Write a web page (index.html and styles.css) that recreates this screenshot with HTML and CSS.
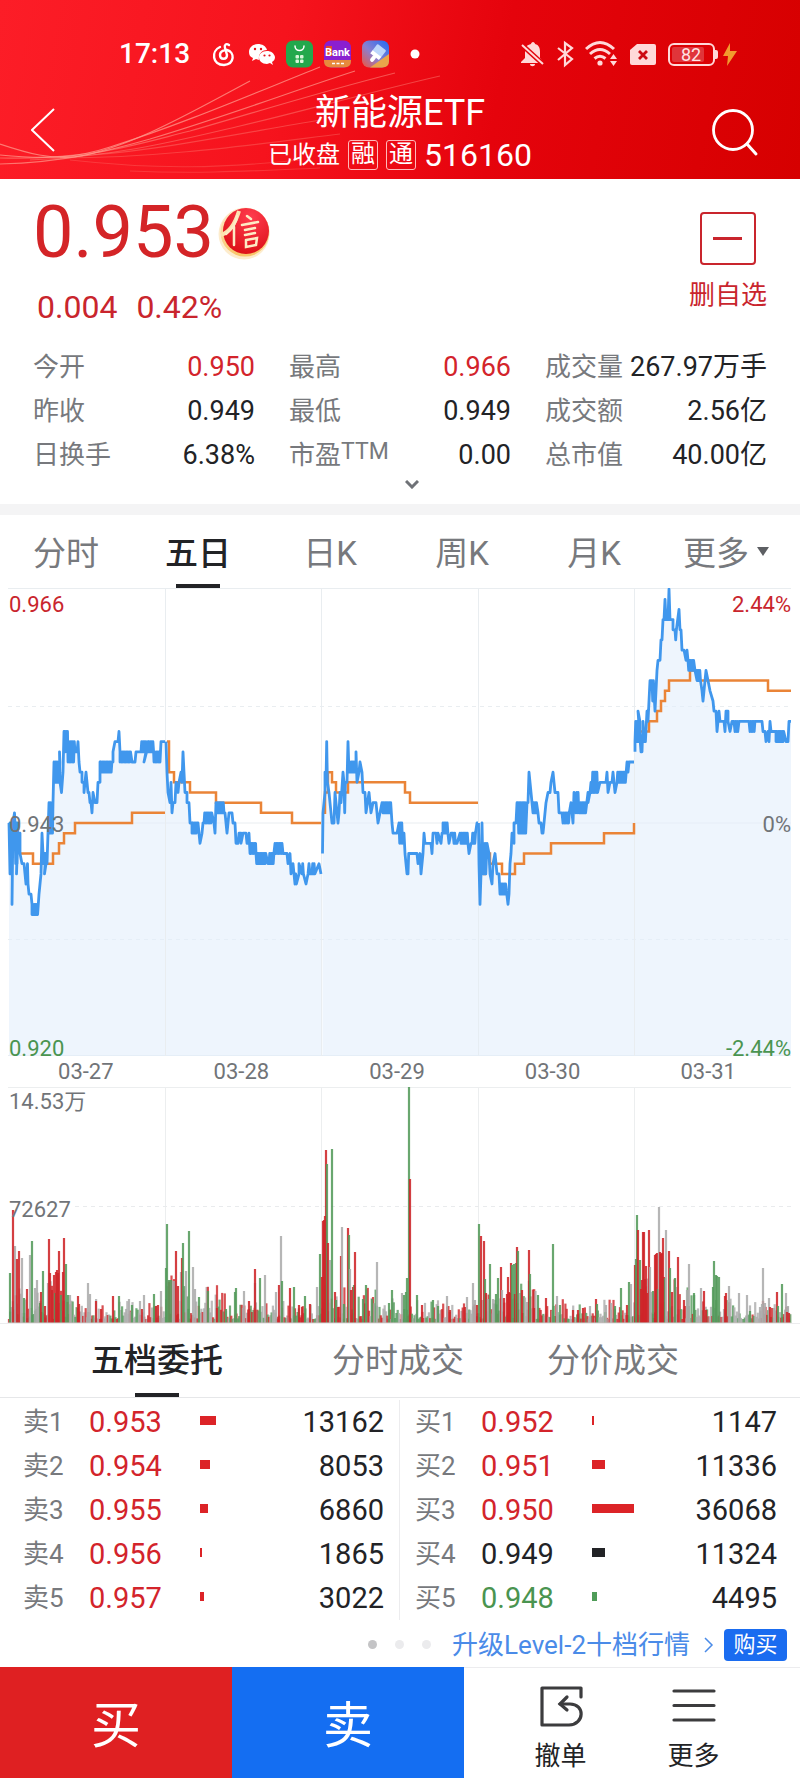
FILE: index.html
```html
<!DOCTYPE html>
<html lang="zh-CN">
<head>
<meta charset="utf-8">
<meta name="viewport" content="width=device-width, initial-scale=1">
<title>新能源ETF 516160</title>
<link rel="stylesheet" href="styles.css">
</head>
<body>
<header class="header">
  <svg class="header-waves" viewBox="0 0 800 179" preserveAspectRatio="none" aria-hidden="true">
    <g fill="none" stroke="#ff9a8c" stroke-width="1.200">
      <path opacity=".75" d="M0 144C30 154 50 159 75 157C130 148 190 113 250 81"/>
      <path opacity=".75" d="M0 155C50 160 80 157 110 147C180 125 250 95 320 67"/>
      <path opacity=".7" d="M0 164C70 162 110 150 150 139C230 115 290 92 355 71"/>
      <path opacity=".5" d="M0 158C90 160 130 146 190 131C260 111 320 92 395 73"/>
      <path opacity=".4" d="M30 160C120 156 180 140 240 126S370 92 440 76"/>
      <path opacity=".35" d="M60 157C140 154 220 137 320 120"/>
      <path opacity=".3" d="M60 158C160 158 250 145 340 134"/>
      <path opacity=".25" d="M70 160C160 170 220 168 300 160"/>
      <path opacity=".25" d="M130 171C200 174 250 171 320 168"/>
    </g>
  </svg>
  <div class="status">
    <span class="clock">17:13</span>
    <div class="status-left">
      <svg width="27" height="28" viewBox="0 0 27 28"><path fill="none" stroke="#fff" stroke-width="2.400" stroke-linecap="round" d="M19 5C16 3 14 5 15 8L17 15C17 20 10 20 10 15C10 11 14 10 17 10C25 12 25 24 14 25C2 25 1 11 10 7"/></svg>
      <svg width="27" height="28" viewBox="0 0 27 28"><path fill="#fff" d="M10 4C4 4 1 8 1 12C1 15 2 17 5 18L4 21L8 19L11 20C10 14 14 10 19 10C18 6 14 4 10 4Z"/><path fill="#fff" d="M19 11C14 11 11 14 11 17.500C11 21 14 24 19 24L22 23L25 25L24 22C26 21 27 19 27 17C26 13 23 11 19 11Z"/><g fill="#e8101a"><circle cx="7" cy="9" r="1.200"/><circle cx="13" cy="9" r="1.200"/><circle cx="16.500" cy="15.500" r="1.100"/><circle cx="21.500" cy="15.500" r="1.100"/></g></svg>
      <svg width="27" height="28" viewBox="0 0 27 28"><rect y=".5" width="27" height="27" rx="7" fill="#22a84c"/><path fill="none" stroke="#fff" stroke-width="1.500" stroke-linecap="round" d="M9 6C9 12 18 12 18 6"/><g fill="#d9f4d8"><rect x="9.500" y="15" width="3.500" height="3.500" rx="1"/><rect x="14" y="15" width="3.500" height="3.500" rx="1"/><rect x="9.500" y="19.500" width="3.500" height="3.500" rx="1"/><rect x="14" y="19.500" width="3.500" height="3.500" rx="1"/></g></svg>
      <svg width="27" height="28" viewBox="0 0 27 28"><rect y=".5" width="27" height="27" rx="7" fill="#8a1fd0"/><path fill="#e78a3c" d="M0 20H27V21Q27 27.500 20 27.500H7Q0 27.500 0 21Z"/><rect x="2" y="6" width="6" height="10" fill="#e5482c"/><text x="1" y="16" class="bank-text">Bank</text><path stroke="#fff" stroke-width="1.500" stroke-dasharray="3 1.500" d="M8 23.500H20"/></svg>
      <svg width="27" height="28" viewBox="0 0 27 28"><defs><linearGradient id="brush" x1="0" y1="1" x2="1" y2="0"><stop offset="0" stop-color="#f0563c"/><stop offset=".45" stop-color="#8a7fd0"/><stop offset="1" stop-color="#1f6cf5"/></linearGradient></defs><rect y=".5" width="27" height="27" rx="7" fill="url(#brush)"/><path fill="#e9a54b" d="M8 27.500L27 14V21Q27 27.500 20 27.500Z"/><g transform="rotate(38 14 14)"><rect x="9" y="5" width="11" height="9" rx="1" fill="#bcd6fb"/><rect x="9" y="13" width="11" height="4" fill="#fff"/><rect x="12.500" y="16" width="4" height="7" rx="2" fill="#fff"/></g></svg>
      <svg width="27" height="28" viewBox="0 0 27 28"><circle cx="15" cy="14" r="4.500" fill="#fff"/></svg>
    </div>
    <div class="status-right">
      <svg width="25" height="28" viewBox="0 0 25 28"><path fill="#ffd9d9" d="M12 2C13 2 14 3 14 4C18 5 19 8 19 12V18L22 22V23H0V22L4 18V11C4 7 6 5 10 4C10 3 11 2 12 2Z"/><path fill="#ffd9d9" d="M9 24H14C14 27 9 27 9 24Z"/><path stroke="#e3040c" stroke-width="5" d="M0 4L23 25"/><path stroke="#ffd9d9" stroke-width="2" d="M1 5L22 24"/></svg>
      <svg width="17" height="28" viewBox="0 0 17 28"><path fill="none" stroke="#ffd9d9" stroke-width="2.200" d="M1 8L15 19L8 25V3L15 8L1 20"/></svg>
      <svg width="33" height="28" viewBox="0 0 33 28"><g fill="none" stroke="#ffd9d9" stroke-width="3"><path d="M1 9Q15-4 29 9"/><path d="M5 14Q15 5 25 14"/><path d="M9.500 18.500Q15 14 20.500 18.500"/></g><circle cx="15" cy="23" r="2.600" fill="#ffd9d9"/><path fill="#ffd9d9" d="M25 19L28.500 14L32 19ZM25 21H32L28.500 26Z"/></svg>
      <svg width="28" height="28" viewBox="0 0 28 28"><path fill="#ffd9d9" d="M8 4H25Q27 4 27 6V23Q27 25 25 25H3Q1 25 1 23V10Z"/><path stroke="#cc0a12" stroke-width="2.800" d="M10 11L18 19M18 11L10 19"/></svg>
      <svg width="70" height="28" viewBox="0 0 70 28"><rect x="1" y="4" width="45" height="21" rx="5" fill="none" stroke="#ffd9d9" stroke-width="2"/><rect x="4" y="7" width="32" height="15" rx="2" fill="#e0353a"/><path fill="#ffd9d9" d="M47 10H48Q50 10 50 12V17Q50 19 48 19H47Z"/><text x="23" y="21" text-anchor="middle" class="battery-text">82</text><path fill="#f29a2e" d="M62 3L55 16H60L59 26L69 11H62Z"/></svg>
    </div>
  </div>
  <div class="navbar">
    <button class="icon-button back" type="button" aria-label="返回"><svg width="24" height="44" viewBox="0 0 24 44"><path fill="none" stroke="#fff" stroke-width="2" d="M23 1L1 22L23 43"/></svg></button>
    <div class="heading">
      <h1 class="title">新能源ETF</h1>
      <p class="subtitle"><span class="state">已收盘</span><span class="tag">融</span><span class="tag">通</span><span class="code">516160</span></p>
    </div>
    <button class="icon-button search" type="button" aria-label="搜索"><svg width="48" height="50" viewBox="0 0 48 50"><circle cx="22" cy="22" r="19.500" fill="none" stroke="#fff" stroke-width="2.800"/><path stroke="#fff" stroke-width="3" stroke-linecap="round" d="M36 36L45 46"/></svg></button>
  </div>
</header>

<main>
  <section class="quote">
    <div class="quote-top">
      <div>
        <div class="price-row">
          <span class="price">0.953</span>
          <svg width="52" height="54" viewBox="0 0 52 54" role="img" aria-label="信">
            <defs><radialGradient id="seal" cx=".6" cy=".2" r=".9"><stop offset="0" stop-color="#ff3c4e"/><stop offset="1" stop-color="#d90c12"/></radialGradient><linearGradient id="gold" x1="0" y1="0" x2="0" y2="1"><stop offset="0" stop-color="#ffeed0"/><stop offset="1" stop-color="#f8c466"/></linearGradient></defs>
            <circle cx="26" cy="28" r="25.500" fill="#fdeccd"/><circle cx="27" cy="26" r="24.500" fill="url(#gold)"/><circle cx="28" cy="25" r="23" fill="url(#seal)"/>
            <path fill="none" stroke="#fde3b0" stroke-width="4" d="M3 29Q15 25 21 5"/>
            <path fill="none" stroke="#fdebc4" stroke-width="2.500" stroke-linecap="round" d="M19 10Q18 20 8 28M16 21V39M29 10L33 13M24 19L40 16M27 24L37 22M27 29L37 27M28 34V41L38 39L39 32L28 34"/>
          </svg>
        </div>
        <div class="change"><span>0.004</span><span>0.42%</span></div>
      </div>
      <button class="favorite" type="button"><span class="minus"></span>删自选</button>
    </div>
    <dl class="stats">
      <div><dt>今开</dt><dd class="up">0.950</dd></div>
      <div><dt>最高</dt><dd class="up">0.966</dd></div>
      <div><dt>成交量</dt><dd>267.97万手</dd></div>
      <div><dt>昨收</dt><dd>0.949</dd></div>
      <div><dt>最低</dt><dd>0.949</dd></div>
      <div><dt>成交额</dt><dd>2.56亿</dd></div>
      <div><dt>日换手</dt><dd>6.38%</dd></div>
      <div><dt>市盈<span class="ttm">TTM</span></dt><dd>0.00</dd></div>
      <div><dt>总市值</dt><dd>40.00亿</dd></div>
    </dl>
    <button class="expand" type="button" aria-label="展开"><svg width="14" height="9" viewBox="0 0 14 9"><path fill="none" stroke="#6f7277" stroke-width="3" d="M1 1L7 7L13 1"/></svg></button>
  </section>

  <nav class="period-tabs">
    <button type="button">分时</button>
    <button type="button" class="active">五日</button>
    <button type="button">日K</button>
    <button type="button">周K</button>
    <button type="button">月K</button>
    <button type="button">更多<span class="caret"></span></button>
  </nav>

  <section class="chart">
    <svg id="price-chart" viewBox="0 0 800 468" aria-label="五日走势">
      <g fill="none" stroke="#e9edf0">
        <path d="M8 .5H791M8 235H791M8 467.500H791M165.500 0V468M321.500 0V468M478.500 0V468M634.500 0V468"/>
        <path stroke-dasharray="4 4" d="M8 118.500H791M8 351.500H791"/>
      </g>
    </svg>
    <span class="axis top-left up">0.966</span>
    <span class="axis top-right up">2.44%</span>
    <span class="axis mid-left">0.943</span>
    <span class="axis mid-right">0%</span>
    <span class="axis bottom-left down">0.920</span>
    <span class="axis bottom-right down">-2.44%</span>
  </section>
  <div class="dates"><span>03-27</span><span>03-28</span><span>03-29</span><span>03-30</span><span>03-31</span></div>
  <section class="chart">
    <svg id="volume-chart" viewBox="0 0 800 236" aria-label="成交量">
      <path fill="none" stroke="#eceeef" d="M8 .5H791M165.500 0V236M321.500 0V236M478.500 0V236M634.500 0V236"/>
      <path fill="none" stroke="#e9ebed" stroke-dasharray="4 4" d="M75 119.500H791"/>
    </svg>
    <span class="axis volume-top">14.53万</span>
    <span class="axis volume-mid">72627</span>
  </section>

  <nav class="book-tabs">
    <button type="button" class="active">五档委托</button>
    <button type="button">分时成交</button>
    <button type="button">分价成交</button>
  </nav>
  <section class="book">
    <table class="side">
      <colgroup><col class="c-level"><col class="c-price"><col class="c-bar"><col></colgroup>
      <tbody>
      <tr><th scope="row">卖1</th><td class="up">0.953</td><td><span class="bar up" style="width:16px"></span></td><td class="qty">13162</td></tr>
      <tr><th scope="row">卖2</th><td class="up">0.954</td><td><span class="bar up" style="width:10px"></span></td><td class="qty">8053</td></tr>
      <tr><th scope="row">卖3</th><td class="up">0.955</td><td><span class="bar up" style="width:8px"></span></td><td class="qty">6860</td></tr>
      <tr><th scope="row">卖4</th><td class="up">0.956</td><td><span class="bar up" style="width:2px"></span></td><td class="qty">1865</td></tr>
      <tr><th scope="row">卖5</th><td class="up">0.957</td><td><span class="bar up" style="width:4px"></span></td><td class="qty">3022</td></tr>
      </tbody>
    </table>
    <table class="side">
      <colgroup><col class="c-level"><col class="c-price"><col class="c-bar"><col></colgroup>
      <tbody>
      <tr><th scope="row">买1</th><td class="up">0.952</td><td><span class="bar up" style="width:2px"></span></td><td class="qty">1147</td></tr>
      <tr><th scope="row">买2</th><td class="up">0.951</td><td><span class="bar up" style="width:13px"></span></td><td class="qty">11336</td></tr>
      <tr><th scope="row">买3</th><td class="up">0.950</td><td><span class="bar up" style="width:42px"></span></td><td class="qty">36068</td></tr>
      <tr><th scope="row">买4</th><td>0.949</td><td><span class="bar" style="width:13px"></span></td><td class="qty">11324</td></tr>
      <tr><th scope="row">买5</th><td class="down">0.948</td><td><span class="bar down" style="width:5px"></span></td><td class="qty">4495</td></tr>
      </tbody>
    </table>
  </section>
  <div class="promo">
    <div class="dots"><i class="on"></i><i></i><i></i></div>
    <a class="upgrade" href="#level2">升级Level-2十档行情<svg width="10" height="16" viewBox="0 0 10 16"><path fill="none" stroke="#4a8be8" stroke-width="1.500" d="M1 1L8 8L1 15"/></svg></a>
    <button class="buy-level" type="button">购买</button>
  </div>
</main>

<footer class="actions">
  <button class="trade buy" type="button">买</button>
  <button class="trade sell" type="button">卖</button>
  <div class="tools">
    <button type="button"><svg width="44" height="42" viewBox="0 0 44 42"><g fill="none" stroke="#3c3c3e" stroke-width="3.200" stroke-linecap="round"><path stroke-linejoin="round" d="M42 11V2H3V39H30C46 38 46 18 31 18H21"/><path d="M28 11L21 18L28 24"/></g></svg>撤单</button>
    <button type="button"><svg width="44" height="42" viewBox="0 0 44 42"><path stroke="#3c3c3e" stroke-width="3.200" stroke-linecap="round" d="M2 5H42M2 19.500H42M2 34H42"/></svg>更多</button>
  </div>
</footer>
<script src="chart.js"></script>
</body>
</html>
```

FILE: styles.css
```css
* { box-sizing: border-box; }

body {
  margin: 0;
  background: #fff;
  color: #222326;
  font-family: Roboto, "Noto Sans CJK SC", sans-serif;
  font-size: 26px;
  line-height: 1;
}

h1, p, dl, dd { margin: 0; }

button {
  margin: 0;
  padding: 0;
  border: 0;
  background: none;
  color: inherit;
  font: inherit;
  cursor: pointer;
}

svg { display: block; }

.up { color: #d3242b; }
.down { color: #4a9450; }

/* Header */
.header {
  position: relative;
  height: 179px;
  padding-top: 37px;
  color: #fff;
  background: linear-gradient(100deg, #fc1d27 0%, #f6131d 35%, #e5030c 62%, #d60000 100%);
}
.header-waves {
  position: absolute;
  inset: 0;
  width: 100%;
  height: 100%;
}
.status {
  position: relative;
  display: flex;
  align-items: center;
  height: 34px;
  padding: 0 62px 0 119px;
}
.clock {
  flex: 0 0 91px;
  font-size: 28px;
  font-weight: 500;
}
.status-left { display: flex; gap: 11px; }
.status-right { display: flex; gap: 11px; margin-left: auto; }
.bank-text { font-size: 11px; font-weight: 700; fill: #fff; }
.battery-text { font-size: 18px; fill: #ffe3e3; }
.navbar {
  position: relative;
  display: grid;
  grid-template-columns: 120px 1fr 120px;
  height: 108px;
  padding-top: 21px;
}
.icon-button { align-self: start; }
.back { padding: 16px 0 0 31px; }
.search { justify-self: end; padding: 16px 41px 0 0; }
.heading {
  display: flex;
  flex-direction: column;
  align-items: center;
}
.title {
  font-size: 36px;
  font-weight: 400;
  line-height: 42px;
}
.subtitle {
  display: flex;
  align-items: center;
  gap: 8px;
  height: 42px;
}
.state { font-size: 24px; }
.tag {
  width: 30px;
  height: 30px;
  border: 1px solid #ffb9b9;
  border-radius: 3px;
  font-size: 24px;
  line-height: 27px;
  text-align: center;
}
.code { font-size: 32px; }

/* Quote summary */
.quote {
  height: 336px;
  padding: 18px 33px 0;
  border-bottom: 11px solid #f4f4f5;
}
.quote-top {
  display: flex;
  justify-content: space-between;
  height: 148px;
}
.price-row {
  display: flex;
  align-items: center;
  gap: 4px;
  height: 72px;
  color: #d42427;
}
.price { font-size: 72px; }
.change {
  display: flex;
  gap: 19px;
  padding: 22px 0 0 4px;
  color: #c9252d;
  font-size: 32px;
}
.favorite {
  display: flex;
  flex-direction: column;
  align-items: center;
  align-self: start;
  gap: 17px;
  padding-top: 15px;
  color: #c9252d;
  font-size: 26px;
}
.minus {
  display: grid;
  place-items: center;
  width: 56px;
  height: 53px;
  border: 2px solid #c9252d;
  border-radius: 4px;
}
.minus::before {
  content: "";
  width: 29px;
  height: 3px;
  background: #c9252d;
}
.stats {
  display: grid;
  grid-template-columns: repeat(3, 1fr);
  column-gap: 34px;
  line-height: 44px;
}
.stats div {
  display: flex;
  justify-content: space-between;
  height: 44px;
  white-space: nowrap;
}
.stats dt { color: #77797d; }
.stats dd { font-size: 27px; }
.ttm { font-size: 23px; line-height: 1; vertical-align: 5px; }
.expand {
  display: block;
  margin: 3px auto 0;
  padding-left: 24px;
}

/* Tabs */
.period-tabs {
  display: grid;
  grid-template-columns: repeat(6, 1fr);
  height: 73px;
  padding-right: 8px;
}
.period-tabs button,
.book-tabs button {
  position: relative;
  color: #77797d;
  font-size: 33px;
  white-space: nowrap;
}
.period-tabs button { padding-top: 3px; }
.period-tabs .active,
.book-tabs .active {
  color: #222326;
  font-weight: 500;
}
.active::after {
  content: "";
  position: absolute;
  bottom: 0;
  left: 50%;
  width: 44px;
  height: 4px;
  margin-left: -22px;
  background: #222326;
}
.caret {
  display: inline-block;
  margin-left: 8px;
  border: 6px solid transparent;
  border-top: 9px solid #5d5f63;
  border-bottom: 0;
  vertical-align: 9px;
}

/* Charts */
.chart { position: relative; }
.chart svg {
  width: 100%;
  height: auto;
}
.axis {
  position: absolute;
  color: #717478;
  font-size: 22px;
}
.axis.up { color: #c9252d; }
.axis.down { color: #4a9450; }
.top-left { top: 6px; left: 9px; }
.top-right { top: 6px; right: 9px; }
.mid-left { top: 50%; left: 9px; margin-top: -8px; }
.mid-right { top: 50%; right: 9px; margin-top: -8px; }
.bottom-left { bottom: -4px; left: 9px; }
.bottom-right { bottom: -4px; right: 9px; }
.volume-top { top: 4px; left: 9px; }
.volume-mid { top: 50%; left: 9px; margin-top: -6px; }
.dates {
  display: grid;
  grid-template-columns: repeat(5, 1fr);
  height: 31px;
  padding: 0 14px 0 8px;
  color: #717478;
  font-size: 22px;
  line-height: 32px;
  text-align: center;
}

/* Order book */
.book-tabs {
  display: grid;
  grid-template-columns: 314fr 168fr 262fr 56fr;
  height: 75px;
  border-top: 1px solid #ececee;
  border-bottom: 1px solid #e6e7e9;
}
.book {
  display: grid;
  grid-template-columns: 1fr 1fr;
  padding-top: 2px;
}
.side {
  width: 100%;
  padding: 0 15px 0 23px;
  border-spacing: 0;
  border-right: 1px solid #ececee;
  table-layout: fixed;
  font-size: 29px;
}
.side + .side {
  padding: 0 23px 0 15px;
  border-right: 0;
}
.c-level { width: 66px; }
.c-price { width: 111px; }
.c-bar { width: 64px; }
.side tr { height: 44px; }
.side th,
.side td { padding: 0; text-align: left; }
.side th {
  color: #77797d;
  font-size: 26px;
  font-weight: 400;
}
.side .qty { text-align: right; }
.bar {
  display: block;
  height: 9px;
  margin-bottom: 4px;
  background: #222326;
}
.bar.up { background: #dc2327; }
.bar.down { background: #4f9c58; }
.promo {
  display: flex;
  align-items: center;
  justify-content: flex-end;
  height: 47px;
  padding: 2px 13px 0 0;
}
.dots { display: flex; gap: 18px; margin-right: 21px; }
.dots i {
  width: 9px;
  height: 9px;
  border-radius: 50%;
  background: #ebebed;
}
.dots .on { background: #c4c4c6; }
.upgrade {
  display: flex;
  align-items: center;
  gap: 14px;
  margin-right: 10px;
  color: #4a8be8;
  text-decoration: none;
}
.buy-level {
  width: 63px;
  height: 32px;
  border-radius: 4px;
  background: #1a6cf0;
  color: #fff;
  font-size: 22px;
}

/* Bottom actions */
.actions {
  display: grid;
  grid-template-columns: 29fr 29fr 42fr;
  height: 111px;
}
.trade {
  padding-top: 6px;
  color: #fff;
  font-size: 50px;
}
.buy { background: #df2022; }
.sell { background: #146ef2; }
.tools {
  display: grid;
  grid-template-columns: 1fr 1fr;
  padding: 0 40px 0 30px;
  border-top: 1px solid #ececee;
}
.tools button {
  display: flex;
  flex-direction: column;
  align-items: center;
  gap: 15px;
  padding-top: 18px;
}
```

FILE: chart.js
```js
const NS = 'http://www.w3.org/2000/svg';
const TICK = 10.17;
const MID = 235;

function add(svg, name, attrs) {
  const el = document.createElementNS(NS, name);
  Object.entries(attrs).forEach(([k, v]) => el.setAttribute(k, v));
  svg.appendChild(el);
}

// "x,tick" is a point; "x1-x2,a,b" is a stretch that swings between ticks a and b.
function parse(text) {
  const points = [];
  text.trim().split(/\s+/).forEach(token => {
    const parts = token.split(',');
    if (parts.length === 3) {
      const [from, to] = parts[0].split('-').map(Number);
      let i = 0;
      for (let x = from; x <= to; x += 0.7) {
        points.push([x, Number(parts[1 + (i % 2)])]);
        i += 1;
      }
    } else {
      points.push(parts.map(Number));
    }
  });
  return points.map(([x, n]) => [x, MID - n * TICK]);
}

function line(points, stepped) {
  return points.map(([x, y], i) => {
    if (i === 0) return `M${x} ${y.toFixed(1)}`;
    return (stepped ? `H${x}` : '') + `L${x} ${y.toFixed(1)}`;
  }).join('');
}

const prices = [
  `9,0 10,-5 10-13,0,-5 12,-8 13,0 14.5,1 15-18,0,-4 16.5,-5 18,-1 20,-1 20,-3 22,-4 24,-4 25,-5 26,-6 27.5,-4 28,-6 29,-7 31,-7
   32,-8 32-38,-9,-8 39,-7 40,-6 41,-5 42,-1 43,-3 43-46,-3,-4 44.5,-5 46,-4 47,-4 48,-1 49,2 49-53,2,-1 53,2 54,6 55-60,4,6
   59.5,7 60,4 61.5,3 63,5 64,9 64-68,7,9 68-75,6,8 75,7 77,7 78,8 79,6 80,5 82,5 82,4 84,4 84,3 86,5 88,3 89,3 90,2 91,2 92,1
   93,3 95,2 97,2 98,4 100,4 100,6 100-112,5,6 113,6 113,7 115,8 118,8 119,9 120,7 120-131,6,7 132,6 135,6 136,7 141,7
   141-147,7,8 144,6 148,8 148-154,7,8 154,6 154-159,6,7 160,6 161,8 165,8`,
  `166,8 167,5 168,3 170,2 171,4 172,1 173,2 175,2 176,4 178,3 179,4 181,5 182,4 183,7 184,5 185,3 187,3 187,2 189,2 190,0
   192,0 192,-1 192-197,-1,0 198,0 199,-1 200,-2 202,-1 203,0 204-212,0,1 214,0 215,-1 216,2 217-224,1,2 225,1 227,-1 229,1
   232,1 233,0 235,0 236,-2 238,-2 239,-1 241,-1 241,-2 243,-1 246,-1 247,-2 249,-2 249,-1 250,-3 250-256,-2,-3 256-266,-3,-4
   268,-4 269-274,-4,-3 275,-2 275-282,-2,-3 283,-3 287,-3 288,-4 290,-3 291,-5 293,-4 294,-5 295-297,-6,-5 299,-5 299,-4
   302-304,-5,-4 306,-6 308,-5 309,-4 310,-5 312-315,-5,-4 319,-4 321,-5`,
  `322.5,-3 323,1 325,3 325,5 326-328,4,8 329,3 331,1 332,0 334,0 335,3 336,2 338,0 339,1 340,3 341,2 343,5 344-346,4,1 347,4
   348,8 349,5 349-356,5,6 356,7 357,4 359,5 360,6 362,5 363,3 365,3 366,1 369,3 371,1 373,2 376,2 377,1 378,0 380,1 382,2
   383-391,1,2 392,0 393,-1 397,-1 399-403,0,-2 404,-1 405,-3 407,-5 408-409,-5,-3 410,-3 417,-3 418,-4 420,-3 421,-5 423,-3
   424,-1 425,-2 431,-2 432,-3 433,-1 436,-1 437,-2 438,-1 441,-2 442,-1 443,-1 443-448,0,-1 449,-2 451,-1 453,-1 454-456,-2,-1
   457,-2 460,-1 461-468,-2,-1 469,-3 471,-2 472-476,-2,-1 477,0 478,0`,
  `478.5,0 479,-4 480,-8 481,-5 482,0 483-486,-5,-2 487,-2 489,-3 490,-5 492,-6 493,-4 495,-3 497,-5 499,-5 500,-7
   500-506,-6,-7 508,-8 509,-7 510,-4 511,-3 512,-1 514,-2 514,0 516,0 517,2 518-526,2,-1 527,2 528,2 529,5 531,3 533-537,1,2
   538,1 539,0 541,0 542,-1 543,-1 544,0 546,2 548,3 550,3 551,4 553,5 554,4 555,3 558,3 559,1 562,1 563-570,0,1 571,2 573,0
   574,3 576-579,1,3 580-586,1,2 588,3 588,2 590,3 591,4 592-598,3,5 600,4 606,4 607,5 608,3 610,4 612,4 613,5 615,3 617-626,4,5
   627,6 628,5 629,6 634,6`,
  `635,7 635-640,8,10 638,11 641,7 642,7 643,10 644-646,8,9 647,11 648,10 650,14 652-654,14,12 655,11 657,15 658,16 660,16
   661,18 662,18 663,20 664,20 665,22 666,20 668,20 669,23 670,20 673,20 673,19 675-677,19,18 679,21 680,19 681,19 682,17
   684,17 686,16 687,17 688-694,16,15 695,15 697,14 697-701,15,14 702,13 703,12 705,14 706,15 708,14 710,13 713,12 714,11
   716,11 717,9 719,11 720,10 724,10 725,9 726,11 728,11 728,10 730,9 732,10 734,10 735-738,9,10 739,10 749,10 750-755,9,10
   756,10 762,10 763,9 765,9 766,8 768,9 769,8 770,10 771,9 776,9 776-784,8,9 786,8 788,8 789,10 791,10`
];

const averages = [
  '20,-3 32,-3 33,-4 52,-4 53,-3 59,-2 64,-1 75,0 132,1 165,1',
  '167,8 169,5 174,4 190,3 216,2 261,1 292,0 321,0',
  '323,1 325,3 328,5 332,4 336,3 348,4 405,3 410,2 478,2',
  '483,-5 485,-3 490,-4 502,-5 515,-4 524,-3 551,-2 604,-1 634,0',
  '636,9 649,10 657,11 661,12 665,13 669,14 690,15 698,14 768,13 791,13'
];

const priceChart = document.getElementById('price-chart');
prices.map(parse).forEach(points => {
  const first = points[0][0];
  const last = points[points.length - 1][0];
  add(priceChart, 'path', { d: `${line(points)}L${last} 468L${first} 468Z`, fill: '#e3effc', 'fill-opacity': 0.6 });
});
averages.forEach(text => {
  add(priceChart, 'path', { d: line(parse(text), true), fill: 'none', stroke: '#ea8437', 'stroke-width': 2.5 });
});
prices.map(parse).forEach(points => {
  add(priceChart, 'path', { d: line(points), fill: 'none', stroke: '#4097ed', 'stroke-width': 2.8, 'stroke-linejoin': 'round' });
});

const BASE = 236;
const COLORS = { r: '#cf2529', g: '#559b5c', s: '#acacac' };
const volumeChart = document.getElementById('volume-chart');
function bar(x, height, color, opacity) {
  add(volumeChart, 'path', { d: `M${x} ${BASE}V${(BASE - height).toFixed(1)}`, stroke: COLORS[color], 'stroke-width': 2.2, opacity });
}

let seed = 7;
function random() {
  seed = (seed * 16807) % 2147483647;
  return seed / 2147483647;
}
for (let x = 9; x < 791; x += 1.3) {
  const day = (x - 9) % 156.5;
  const level = day < 60 ? 30 : 15;
  const height = 4 + level * random() * random() * 1.6;
  const pick = random();
  bar(x, height, pick < 0.34 ? 'r' : pick < 0.62 ? 'g' : 's', 0.8);
}

// Colour, x and height of each tall bar.
`g10,50 s15,77 r13,113 r17,64 r19,72 s22,65 g24,25 r27,34 s30,68 g32,82 s35,35 s37,43 g40,20 r41,31 g43,52 r45,17 s48,40 r49,84 r50,50 r52,33
 r54,48 g55,30 r56,51 r57,53 r58,50 r59,72 g61,28 r63,51 r64,85 g66,59 g68,28 s70,28 r78,27 r79,19 s88,40 s90,29 r96,22 r101,14 r113,27 g119,27 s129,24
 g132,18 s140,22 r142,14 s144,28 g154,29 r156,17 r158,18 s161,32 g166,55 g167,99 g169,43 g171,43 s173,42 s175,42 r176,72 r178,37 s181,51 r182,65
 g183,80 s186,52 g189,92 s193,56 s195,34 g199,26 g208,32 r217,15 g226,14 g235,31 g236,35 s244,32 r249,22 s255,40 r255,54 g260,45 s265,48
 s276,31 r279,38 s281,87 g282,42 r290,35 g294,36 r299,18 r302,16 g305,27 r310,19 s317,36 g320,69 r322,46 r323,102 r324,103 r325,107
 r326,173 g327,159 r328,80 s330,63 g332,174 r335,31 g336,23 r338,16 r341,67 s342,96 g344,19 r348,95 g349,88 s350,54 r351,33 r353,36 g354,38 r355,71
 g363,24 g366,38 g372,24 s377,61 g389,20 g392,33 s402,30 g404,28 g406,31 g407,45 g409,236 r410,144 g417,28 r422,18 g433,23 g438,17 s447,27 r450,13
 r465,16 s467,26 s473,40 s475,23 r477,18 g479,99 r481,87 r484,82 g485,44 r486,30 s488,24 g490,59 s493,24 g496,29 g498,45 r501,56 s502,33
 r504,25 r507,29 r508,46 r509,31 r510,30 r511,60 g512,58 g514,59 r515,29 g516,60 r517,76 g518,72 r522,33 s527,21 r529,73 g530,49 r534,15 g538,28 r546,25
 g553,79 s557,27 g560,18 r573,13 r578,13 r583,15 s590,17 r596,24 g597,19 s606,18 s611,20 g615,17 g621,35 r627,18 g629,41 s631,39
 r635,58 g636,64 g637,108 r638,93 g640,63 r641,34 r642,43 r643,91 r644,91 r645,44 r646,57 r647,30 r649,93 s650,56 s651,31 g653,32 r655,68 r656,69 r657,70
 g658,34 s659,116 r660,71 r661,69 r662,70 r663,85 r664,46 g665,45 s666,93 r669,72 g670,55 r672,31 g675,45 r678,66 r684,23 s687,33 s689,59 g694,30
 s701,35 r704,32 r706,13 g713,36 g714,62 g716,48 g717,47 g719,46 r725,27 r726,30 s729,37 s739,30 s747,28 g750,12 s760,16 s762,19 s763,55 s765,20
 s769,25 r770,16 s774,15 r777,31 g778,17 g782,39 s786,30 s788,17 r787,11 r789,10`
  .trim().split(/\s+/).forEach(token => {
    const [x, height] = token.slice(1).split(',').map(Number);
    bar(x, height, token[0], 0.88);
  });
add(volumeChart, 'path', { d: 'M8 235.500H791', stroke: '#c5beb9', 'stroke-width': 1, opacity: 0.6 });
```
